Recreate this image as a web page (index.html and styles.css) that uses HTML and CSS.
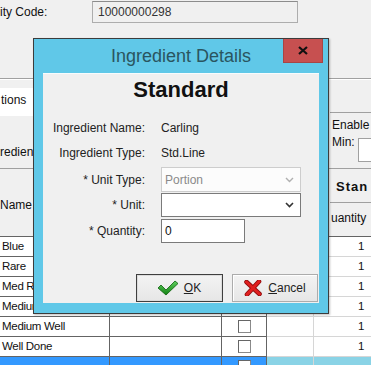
FILE: index.html
```html
<!DOCTYPE html>
<html>
<head>
<meta charset="utf-8">
<link rel="stylesheet" href="styles.css">
</head>
<body>
<div class="page">
  <div class="code-row">
    <span class="code-label">ity Code:</span>
    <div class="code-box">10000000298</div>
  </div>
  <div class="divider"></div>
  <div class="split tabs">
    <div class="side-left"><div class="tab"><span class="tab-text">tions</span></div></div>
    <div class="side-right"><div class="tab-edge"></div></div>
  </div>
  <div class="split band-a">
    <div class="side-left"><span class="lbl-ing">redient</span></div>
    <div class="side-right">
      <div class="r-enable">Enable</div>
      <div class="r-min"><span class="min-lbl">Min:</span><span class="min-box"></span></div>
    </div>
  </div>
  <div class="hline"></div>
  <div class="split band-b">
    <div class="side-left"><span>Name</span></div>
    <div class="side-right">
      <div class="r-head">Stan</div>
      <div class="r-line"></div>
      <div class="r-qty">uantity</div>
    </div>
  </div>
  <div class="grid">
    <div class="row"><div class="cell c1">Blue</div><div class="cell c2"></div><div class="cell c3"><span class="chk"></span></div><div class="cell c4"></div><div class="cell c5">1</div></div>
    <div class="row"><div class="cell c1">Rare</div><div class="cell c2"></div><div class="cell c3"><span class="chk"></span></div><div class="cell c4"></div><div class="cell c5">1</div></div>
    <div class="row"><div class="cell c1">Med Rare</div><div class="cell c2"></div><div class="cell c3"><span class="chk"></span></div><div class="cell c4"></div><div class="cell c5">1</div></div>
    <div class="row"><div class="cell c1">Medium</div><div class="cell c2"></div><div class="cell c3"><span class="chk"></span></div><div class="cell c4"></div><div class="cell c5">1</div></div>
    <div class="row"><div class="cell c1">Medium Well</div><div class="cell c2"></div><div class="cell c3"><span class="chk"></span></div><div class="cell c4"></div><div class="cell c5">1</div></div>
    <div class="row"><div class="cell c1">Well Done</div><div class="cell c2"></div><div class="cell c3"><span class="chk"></span></div><div class="cell c4"></div><div class="cell c5">1</div></div>
    <div class="row sel"><div class="cell c1"></div><div class="cell c2"></div><div class="cell c3"><span class="chk"></span></div><div class="cell c4"></div><div class="cell c5"></div></div>
  </div>
</div>

<div class="dialog">
  <div class="titlebar">
    <span class="title">Ingredient Details</span>
    <div class="close">
      <svg width="10" height="9" viewBox="0 0 10 9"><path d="M1 1 L9 8 M9 1 L1 8" stroke="#111" stroke-width="2.2" fill="none"/></svg>
    </div>
  </div>
  <div class="client">
    <div class="heading">Standard</div>
    <div class="field f1"><span class="lbl">Ingredient Name:</span><span class="val">Carling</span></div>
    <div class="field f2"><span class="lbl">Ingredient Type:</span><span class="val">Std.Line</span></div>
    <div class="field f3"><span class="lbl">* Unit Type:</span>
      <div class="combo disabled"><span>Portion</span>
        <svg width="9" height="6" viewBox="0 0 9 6"><path d="M1 1 L4.5 4.5 L8 1" stroke="#b0b0b0" stroke-width="1.4" fill="none"/></svg>
      </div>
    </div>
    <div class="field f4"><span class="lbl">* Unit:</span>
      <div class="combo"><span></span>
        <svg width="9" height="6" viewBox="0 0 9 6"><path d="M1 1 L4.5 4.5 L8 1" stroke="#333" stroke-width="1.6" fill="none"/></svg>
      </div>
    </div>
    <div class="field f5"><span class="lbl">* Quantity:</span><div class="textbox">0</div></div>
    <div class="buttons">
      <button class="btn default">
        <svg width="20" height="16" viewBox="0 0 20 16"><defs><linearGradient id="g" x1="0" y1="0" x2="0" y2="1"><stop offset="0" stop-color="#5fd05f"/><stop offset="1" stop-color="#118011"/></linearGradient></defs><polygon points="0,8 3,5 8,10 17,1 20,3.5 8,15" fill="url(#g)" stroke="#0c5f0c" stroke-width="0.8"/></svg>
        <span><u>O</u>K</span>
      </button>
      <button class="btn">
        <svg width="18" height="16" viewBox="0 0 18 16"><path d="M2.5 2 L15.5 14 M15 1.5 L3 14.5" stroke="#8e0c0c" stroke-width="4.6" stroke-linecap="round" fill="none"/><path d="M2.5 2 L15.5 14 M15 1.5 L3 14.5" stroke="#e02020" stroke-width="3" stroke-linecap="round" fill="none"/></svg>
        <span><u>C</u>ancel</span>
      </button>
    </div>
  </div>
</div>
</body>
</html>
```
FILE: styles.css
```css
html, body {
  margin: 0;
}
body {
  width: 371px;
  height: 365px;
  overflow: hidden;
  background: #f0f0f0;
  font-family: "Liberation Sans", Arial, sans-serif;
  font-size: 12px;
  color: #111;
  position: relative;
}

.code-row {
  display: flex;
  align-items: center;
  padding-top: 1px;
  height: 22px;
}
.code-label {
  width: 92px;
  white-space: nowrap;
}
.code-box {
  box-sizing: border-box;
  width: 206px;
  height: 22px;
  border: 1px solid #adadad;
  border-top-color: #8c8c8c;
  padding-left: 5px;
  line-height: 20px;
  color: #333;
  background: #f0f0f0;
}
.divider {
  margin-top: 55px;
  height: 1px;
  background: #a0a0a0;
  box-shadow: 0 1px 0 #fff;
}

.split {
  display: flex;
  justify-content: space-between;
}
.side-left {
  width: 33px;
  white-space: nowrap;
}
.side-right {
  width: 41px;
  white-space: nowrap;
}

.tabs {
  height: 37px;
}
.tab {
  margin-top: 9px;
  height: 28px;
  box-sizing: border-box;
  background: #fff;
  padding-top: 4px;
  padding-left: 1px;
  line-height: 16px;
}
.tab-edge {
  margin-top: 33px;
  height: 1px;
  background: #a0a0a0;
}

.band-a {
  height: 52px;
}
.band-a .side-left {
  padding-top: 28px;
  line-height: 16px;
  box-sizing: border-box;
}
.r-enable {
  padding: 1px 0 0 2px;
  line-height: 16px;
}
.r-min {
  display: flex;
  margin-top: 1px;
  padding-left: 2px;
}
.min-lbl {
  width: 25px;
  line-height: 16px;
}
.min-box {
  margin-left: 2px;
  margin-top: 4px;
  width: 14px;
  height: 24px;
  box-sizing: border-box;
  background: #fff;
  border: 1px solid #a0a0a0;
  border-right: 0;
}
.hline {
  height: 1px;
  background: #a0a0a0;
}

.band-b {
  height: 67px;
}
.band-b .side-left {
  padding-top: 28px;
  line-height: 16px;
  box-sizing: border-box;
}
.r-head {
  font-weight: bold;
  font-size: 13px;
  letter-spacing: 1px;
  padding: 10px 0 0 6px;
  line-height: 16px;
}
.r-line {
  margin-top: 7px;
  height: 1px;
  background: #a0a0a0;
}
.r-qty {
  margin-top: 7px;
  padding-left: 1px;
  line-height: 16px;
}

.grid {
  border-top: 1px solid #646464;
  font-size: 11.5px;
  letter-spacing: -0.3px;
}
.row {
  display: grid;
  grid-template-columns: 110px 112px 45px 47px 1fr;
  height: 20px;
}
.cell {
  box-sizing: border-box;
  border-bottom: 1px solid #646464;
  border-right: 1px solid #646464;
  background: #fff;
  line-height: 19px;
  padding-left: 2px;
  overflow: hidden;
  white-space: nowrap;
}
.cell.c3 {
  display: flex;
  align-items: center;
  justify-content: center;
  padding-left: 0;
}
.cell.c4 {
  border-right-color: #d6d6d6;
  border-bottom-color: #d6d6d6;
}
.cell.c5 {
  border-right: 0;
  border-bottom-color: #d6d6d6;
  text-align: right;
  padding-right: 7px;
}
.chk {
  width: 13px;
  height: 13px;
  box-sizing: border-box;
  background: #fff;
  border: 1px solid #8a8a8a;
  border-top-color: #666;
  border-left-color: #666;
}
.row.sel .c1,
.row.sel .c2,
.row.sel .c3 {
  background: #3399ff;
  color: #fff;
}
.row.sel .c4,
.row.sel .c5 {
  background: #8ad3e6;
}

/* dialog window over the page */
.dialog {
  position: absolute;
  left: 33px;
  top: 38px;
  width: 296px;
  height: 276px;
  box-sizing: border-box;
  border: 1px solid #3c3c3c;
  background: #60c8e8;
  padding: 0 9px 10px 9px;
  display: flex;
  flex-direction: column;
  box-shadow: 1px 1px 2px rgba(0, 0, 0, 0.25);
}
.titlebar {
  position: relative;
  height: 34px;
  display: flex;
  align-items: center;
  justify-content: center;
}
.title {
  font-size: 18px;
  color: #2a5560;
  padding-top: 1px;
}
.close {
  position: absolute;
  top: 0;
  right: -4px;
  width: 40px;
  height: 24px;
  box-sizing: border-box;
  background: #c75050;
  border: 1px solid #a84545;
  border-top: 0;
  display: flex;
  align-items: center;
  justify-content: center;
}
.client {
  flex: 1;
  background: #f0f0f0;
  border-top: 1px solid #f8fcfd;
  box-sizing: border-box;
  display: flex;
  flex-direction: column;
}
.heading {
  font-size: 22px;
  font-weight: bold;
  line-height: 24px;
  text-align: center;
  padding-top: 4px;
  color: #111;
}
.field {
  display: grid;
  grid-template-columns: 102px auto;
  column-gap: 16px;
  align-items: center;
  justify-items: start;
}
.field .lbl {
  justify-self: end;
  color: #222;
  white-space: nowrap;
}
.field .val {
  color: #222;
}
.f1 { margin-top: 16px; height: 20px; }
.f2 { margin-top: 5px; height: 20px; }
.f3 { margin-top: 4px; height: 25px; }
.f4 { margin-top: 1px; height: 24px; }
.f5 { margin-top: 2px; height: 24px; }

.combo {
  box-sizing: border-box;
  width: 140px;
  height: 100%;
  background: #fff;
  border: 1px solid #7a7a7a;
  display: flex;
  align-items: center;
  justify-content: space-between;
  padding: 0 6px 0 3px;
}
.combo.disabled {
  border-color: #cdcdcd;
  color: #8a8a8a;
  background: #fcfcfc;
}
.textbox {
  box-sizing: border-box;
  width: 84px;
  height: 100%;
  background: #fff;
  border: 1px solid #7a7a7a;
  padding-left: 3px;
  line-height: 22px;
}

.buttons {
  margin-top: 31px;
  display: flex;
  justify-content: flex-end;
  gap: 9px;
  padding-right: 1px;
}
.btn {
  box-sizing: border-box;
  height: 28px;
  width: 86px;
  margin: 0;
  padding: 0;
  font-family: "Liberation Sans", Arial, sans-serif;
  font-size: 12px;
  color: #222;
  display: flex;
  align-items: center;
  justify-content: center;
  gap: 6px;
  border: 1px solid #acacac;
  background: linear-gradient(#f3f3f3, #e6e6e6);
  box-shadow: inset 1px 1px 0 #fff;
}
.btn.default {
  width: 87px;
  border-color: #3f3f3f;
  box-shadow: inset 0 0 0 1px #dcdcdc;
}
```
